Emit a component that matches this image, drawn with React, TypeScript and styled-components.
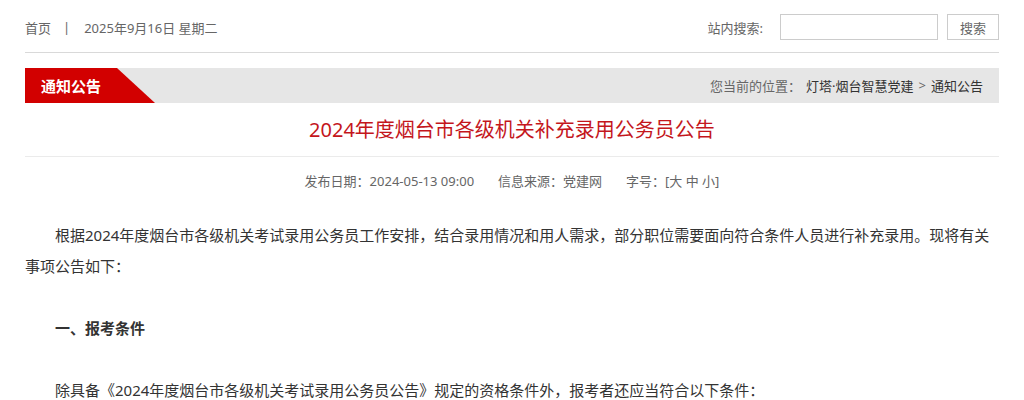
import React from 'react'
import styled, {createGlobalStyle} from 'styled-components'

const GlobalStyle = createGlobalStyle`
    body {
        margin: 0;
        background: #fff;
        font-family: "Noto Sans", "Noto Sans CJK SC", sans-serif;
        color: #333;
    }
`

const Page = styled.div`
    width: 974px;
    margin: 0 auto;
`

const TopBar = styled.div`
    height: 53px;
    display: flex;
    align-items: center;
    justify-content: space-between;
    border-bottom: 1px solid #d9d9d9;
    font-size: 13px;
    color: #666;
    padding-top: 2px;
    box-sizing: border-box;
`

const DateLine = styled.div`
    display: flex;
    align-items: center;
`

const Sep = styled.span`
    margin: 0 14px 0 12px;
`

const Search = styled.form`
    display: flex;
    align-items: center;
`

const SearchLabel = styled.label`
    margin-right: 17px;
`

const SearchInput = styled.input`
    width: 158px;
    height: 26px;
    box-sizing: border-box;
    border: 1px solid #ccc;
    outline: none;
    margin-right: 9px;
`

const SearchButton = styled.button`
    width: 52px;
    height: 26px;
    border: 1px solid #ccc;
    background: #fff;
    color: #666;
    font-size: 13px;
    font-family: inherit;
    padding: 0;
`

const Band = styled.div`
    margin-top: 15px;
    height: 35px;
    background: #e6e6e6;
    display: flex;
    align-items: center;
    justify-content: space-between;
`

const Tab = styled.div`
    height: 100%;
    width: 130px;
    background: #d20000;
    clip-path: polygon(0 0, 92px 0, 130px 100%, 0 100%);
    color: #fff;
    font-size: 15px;
    font-weight: 700;
    display: flex;
    align-items: center;
    padding-left: 16px;
    box-sizing: border-box;
`

const Crumbs = styled.div`
    font-size: 13px;
    color: #666;
    padding-right: 16px;
    display: flex;
    gap: 5px;
`

const Crumb = styled.a`
    color: #333;
    text-decoration: none;
`

const Title = styled.h1`
    margin: 0;
    height: 53px;
    line-height: 53px;
    text-align: center;
    font-size: 20px;
    font-weight: 400;
    color: #c4161c;
    border-bottom: 1px solid #ebebeb;
`

const Meta = styled.div`
    display: flex;
    justify-content: center;
    gap: 24px;
    font-size: 13px;
    color: #666;
    line-height: 48px;
    margin-bottom: 15px;
`

const Body = styled.div`
    font-size: 15px;
    line-height: 31px;
    color: #333;
`

const Para = styled.p<{$bold?: boolean}>`
    margin: 0;
    text-indent: 2em;
    min-height: 31px;
    font-weight: ${p => (p.$bold ? 700 : 400)};
`

const App = () => (
    <>
        <GlobalStyle />
        <Page>
            <TopBar>
                <DateLine>
                    <span>首页</span>
                    <Sep>|</Sep>
                    <span>2025年9月16日 星期二</span>
                </DateLine>
                <Search onSubmit={e => e.preventDefault()}>
                    <SearchLabel htmlFor='kw'>站内搜索:</SearchLabel>
                    <SearchInput id='kw' type='text' />
                    <SearchButton type='submit'>搜索</SearchButton>
                </Search>
            </TopBar>
            <Band>
                <Tab>通知公告</Tab>
                <Crumbs>
                    <span>您当前的位置：</span>
                    <Crumb href='#'>灯塔·烟台智慧党建</Crumb>
                    <span>&gt;</span>
                    <Crumb href='#'>通知公告</Crumb>
                </Crumbs>
            </Band>
            <Title>2024年度烟台市各级机关补充录用公务员公告</Title>
            <Meta>
                <span>发布日期：2024-05-13 09:00</span>
                <span>信息来源：党建网</span>
                <span>字号：[大 中 小]</span>
            </Meta>
            <Body>
                <Para>
                    根据2024年度烟台市各级机关考试录用公务员工作安排，结合录用情况和用人需求，部分职位需要面向符合条件人员进行补充录用。现将有关事项公告如下：
                </Para>
                <Para />
                <Para $bold>一、报考条件</Para>
                <Para />
                <Para>
                    除具备《2024年度烟台市各级机关考试录用公务员公告》规定的资格条件外，报考者还应当符合以下条件：
                </Para>
            </Body>
        </Page>
    </>
)

App.displayName = 'App'
export default App
